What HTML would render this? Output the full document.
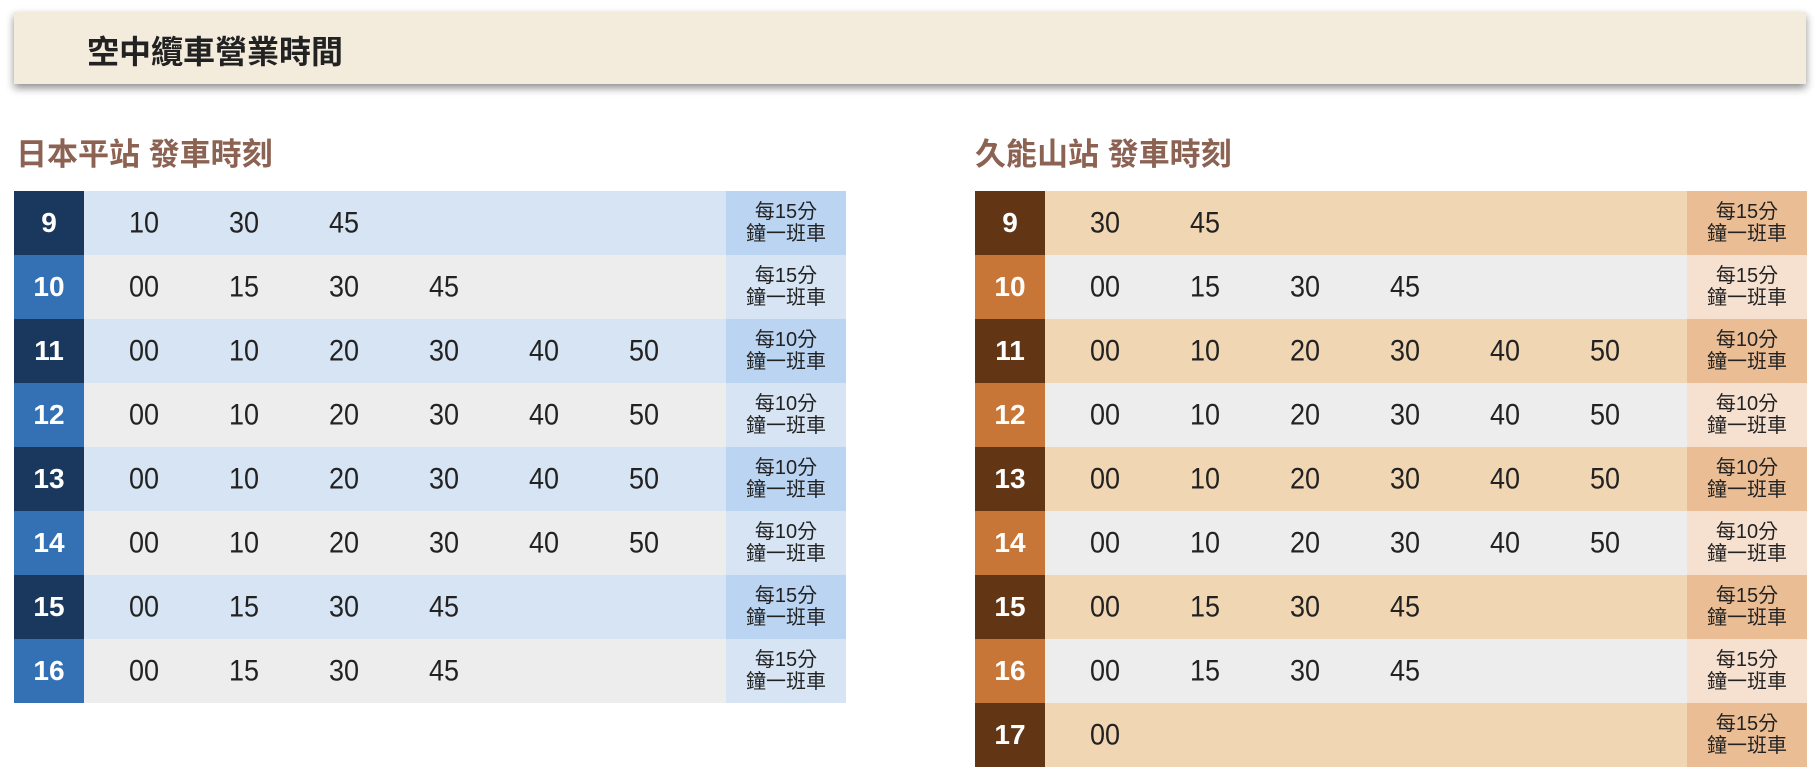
<!DOCTYPE html>
<html><head><meta charset="utf-8"><style>
body{margin:0;width:1820px;height:780px;background:#fff;font-family:"Liberation Sans","Noto Sans CJK TC",sans-serif;position:relative;overflow:hidden}
.hdr{position:absolute;left:14px;top:12px;width:1792px;height:72px;background:#f3ecdc;box-shadow:0 4px 8px rgba(0,0,0,.45)}
.hdr span{position:absolute;left:73px;top:15px;font-size:32px;font-weight:bold;color:#222}
.st{position:absolute;top:129px;font-size:31px;font-weight:bold;color:#8c6253}
table{position:absolute;top:191px;width:832px;border-collapse:collapse}
td{height:64px;padding:0;font-size:27px;color:#222}
td.h{width:70px;text-align:center;color:#fff;font-weight:bold;font-size:28px}
td.m{width:100px;text-align:center;transform:scaleY(1.08)}
td.n{width:120px;text-align:center;font-size:20px;line-height:22px}
td.sp{width:10px}
.L tr:nth-child(odd){background:#d6e4f3}.L tr:nth-child(even){background:#ededed}
.L tr:nth-child(odd) .h{background:#1a375e}.L tr:nth-child(even) .h{background:#3471b4}
.L tr:nth-child(odd) .n{background:#bad4f2}.L tr:nth-child(even) .n{background:#d6e4f3}
.R tr:nth-child(odd){background:#f1d6b4}.R tr:nth-child(even){background:#ededed}
.R tr:nth-child(odd) .h{background:#623515}.R tr:nth-child(even) .h{background:#c87637}
.R tr:nth-child(odd) .n{background:#ebbd94}.R tr:nth-child(even) .n{background:#f6e1d1}
</style></head><body>
<div class="hdr"><span>空中纜車營業時間</span></div>
<div class="st" style="left:16px">日本平站 發車時刻</div>
<div class="st" style="left:975px">久能山站 發車時刻</div>
<table class="L" style="left:14px">
<tr><td class="h">9</td><td class="sp"></td><td class="m">10</td><td class="m">30</td><td class="m">45</td><td class="m"></td><td class="m"></td><td class="m"></td><td></td><td class="n">每15分<br>鐘一班車</td></tr>
<tr><td class="h">10</td><td class="sp"></td><td class="m">00</td><td class="m">15</td><td class="m">30</td><td class="m">45</td><td class="m"></td><td class="m"></td><td></td><td class="n">每15分<br>鐘一班車</td></tr>
<tr><td class="h">11</td><td class="sp"></td><td class="m">00</td><td class="m">10</td><td class="m">20</td><td class="m">30</td><td class="m">40</td><td class="m">50</td><td></td><td class="n">每10分<br>鐘一班車</td></tr>
<tr><td class="h">12</td><td class="sp"></td><td class="m">00</td><td class="m">10</td><td class="m">20</td><td class="m">30</td><td class="m">40</td><td class="m">50</td><td></td><td class="n">每10分<br>鐘一班車</td></tr>
<tr><td class="h">13</td><td class="sp"></td><td class="m">00</td><td class="m">10</td><td class="m">20</td><td class="m">30</td><td class="m">40</td><td class="m">50</td><td></td><td class="n">每10分<br>鐘一班車</td></tr>
<tr><td class="h">14</td><td class="sp"></td><td class="m">00</td><td class="m">10</td><td class="m">20</td><td class="m">30</td><td class="m">40</td><td class="m">50</td><td></td><td class="n">每10分<br>鐘一班車</td></tr>
<tr><td class="h">15</td><td class="sp"></td><td class="m">00</td><td class="m">15</td><td class="m">30</td><td class="m">45</td><td class="m"></td><td class="m"></td><td></td><td class="n">每15分<br>鐘一班車</td></tr>
<tr><td class="h">16</td><td class="sp"></td><td class="m">00</td><td class="m">15</td><td class="m">30</td><td class="m">45</td><td class="m"></td><td class="m"></td><td></td><td class="n">每15分<br>鐘一班車</td></tr>
</table>
<table class="R" style="left:975px">
<tr><td class="h">9</td><td class="sp"></td><td class="m">30</td><td class="m">45</td><td class="m"></td><td class="m"></td><td class="m"></td><td class="m"></td><td></td><td class="n">每15分<br>鐘一班車</td></tr>
<tr><td class="h">10</td><td class="sp"></td><td class="m">00</td><td class="m">15</td><td class="m">30</td><td class="m">45</td><td class="m"></td><td class="m"></td><td></td><td class="n">每15分<br>鐘一班車</td></tr>
<tr><td class="h">11</td><td class="sp"></td><td class="m">00</td><td class="m">10</td><td class="m">20</td><td class="m">30</td><td class="m">40</td><td class="m">50</td><td></td><td class="n">每10分<br>鐘一班車</td></tr>
<tr><td class="h">12</td><td class="sp"></td><td class="m">00</td><td class="m">10</td><td class="m">20</td><td class="m">30</td><td class="m">40</td><td class="m">50</td><td></td><td class="n">每10分<br>鐘一班車</td></tr>
<tr><td class="h">13</td><td class="sp"></td><td class="m">00</td><td class="m">10</td><td class="m">20</td><td class="m">30</td><td class="m">40</td><td class="m">50</td><td></td><td class="n">每10分<br>鐘一班車</td></tr>
<tr><td class="h">14</td><td class="sp"></td><td class="m">00</td><td class="m">10</td><td class="m">20</td><td class="m">30</td><td class="m">40</td><td class="m">50</td><td></td><td class="n">每10分<br>鐘一班車</td></tr>
<tr><td class="h">15</td><td class="sp"></td><td class="m">00</td><td class="m">15</td><td class="m">30</td><td class="m">45</td><td class="m"></td><td class="m"></td><td></td><td class="n">每15分<br>鐘一班車</td></tr>
<tr><td class="h">16</td><td class="sp"></td><td class="m">00</td><td class="m">15</td><td class="m">30</td><td class="m">45</td><td class="m"></td><td class="m"></td><td></td><td class="n">每15分<br>鐘一班車</td></tr>
<tr><td class="h">17</td><td class="sp"></td><td class="m">00</td><td class="m"></td><td class="m"></td><td class="m"></td><td class="m"></td><td class="m"></td><td></td><td class="n">每15分<br>鐘一班車</td></tr>
</table>
</body></html>
